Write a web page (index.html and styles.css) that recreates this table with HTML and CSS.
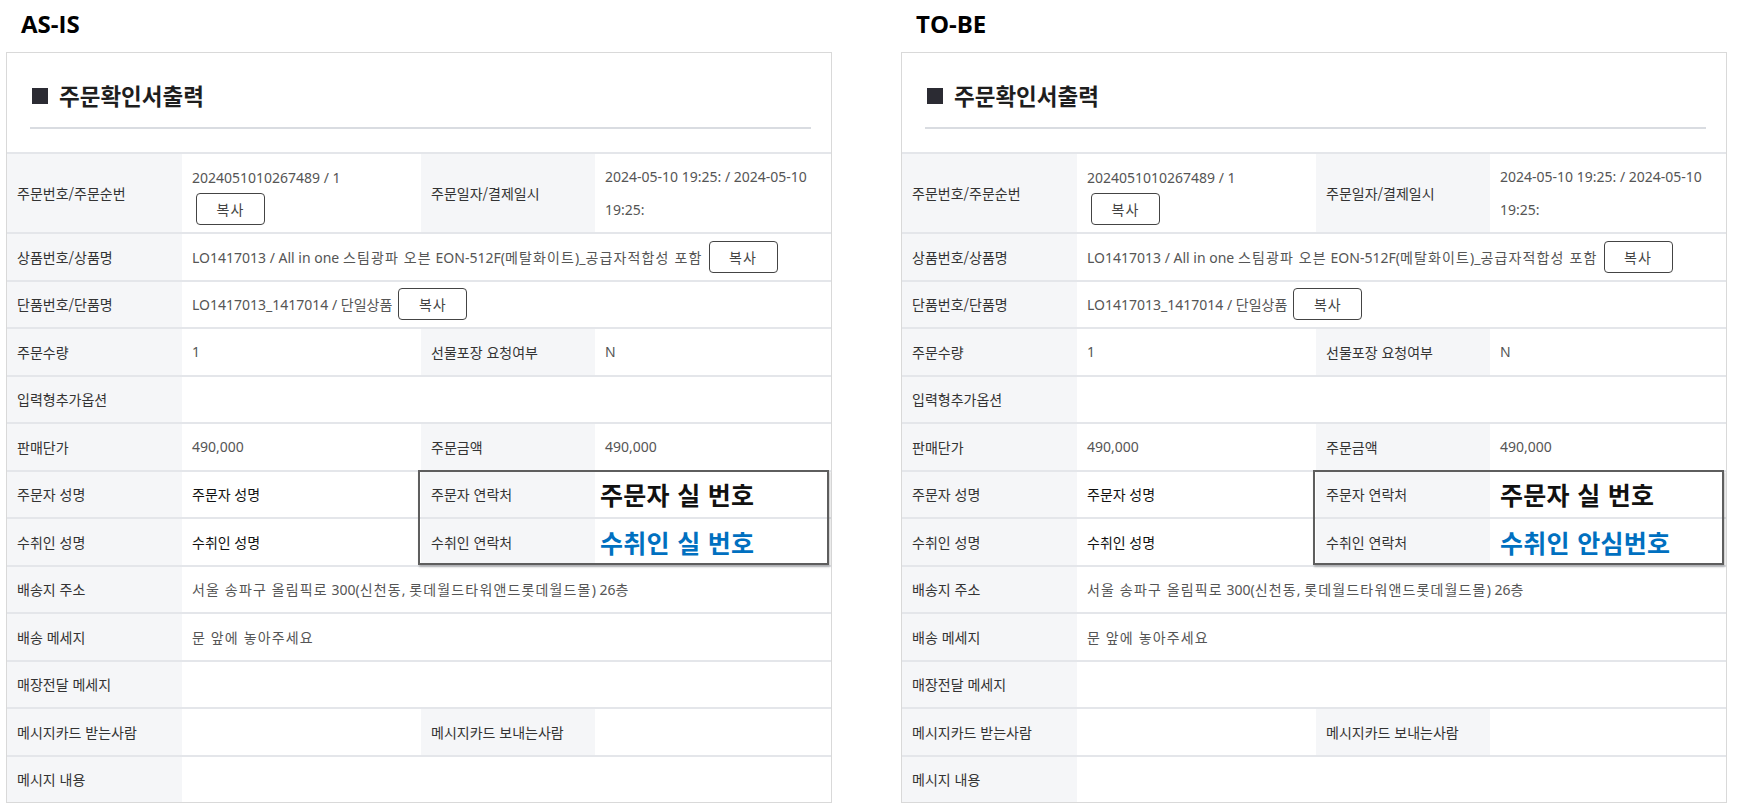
FILE: index.html
```html
<!DOCTYPE html>
<html lang="ko">
<head>
<meta charset="utf-8">
<title>주문확인서출력 AS-IS / TO-BE</title>
<link rel="stylesheet" href="styles.css">
</head>
<body>
<div class="page">
  <section class="col">
    <h2 class="title">AS-IS</h2>
    <div class="panel">
      <div class="head"><h1 class="head-title"><span class="sq"></span>주문확인서출력</h1></div>
      <div class="table">
        <div class="row row--tall">
          <div class="th">주문번호/주문순번</div>
          <div class="td td--stack"><span class="line">2024051010267489 / 1</span><button class="btn btn--under">복사</button></div>
          <div class="th">주문일자/결제일시</div>
          <div class="td td--date">2024-05-10 19:25: / 2024-05-10 19:25:</div>
        </div>
        <div class="row">
          <div class="th">상품번호/상품명</div>
          <div class="td td--wide"><span>LO1417013 / All in one <span class="ko">스팀광파 오븐</span> EON-512F(<span class="ko">메탈화이트</span>)_<span class="ko">공급자적합성 포함</span></span><button class="btn">복사</button></div>
        </div>
        <div class="row">
          <div class="th">단품번호/단품명</div>
          <div class="td td--wide">LO1417013_1417014 / 단일상품<button class="btn">복사</button></div>
        </div>
        <div class="row">
          <div class="th">주문수량</div>
          <div class="td">1</div>
          <div class="th">선물포장 요청여부</div>
          <div class="td">N</div>
        </div>
        <div class="row">
          <div class="th">입력형추가옵션</div>
          <div class="td td--wide"></div>
        </div>
        <div class="row">
          <div class="th">판매단가</div>
          <div class="td">490,000</div>
          <div class="th">주문금액</div>
          <div class="td">490,000</div>
        </div>
        <div class="pair">
          <div class="row">
            <div class="th">주문자 성명</div>
            <div class="td td--dark">주문자 성명</div>
            <div class="th">주문자 연락처</div>
            <div class="td td--big td--near">주문자 실 번호</div>
          </div>
          <div class="row">
            <div class="th">수취인 성명</div>
            <div class="td td--dark">수취인 성명</div>
            <div class="th">수취인 연락처</div>
            <div class="td td--big td--blue td--near">수취인 실 번호</div>
          </div>
          <div class="hl"></div>
        </div>
        <div class="row">
          <div class="th">배송지 주소</div>
          <div class="td td--wide"><span><span class="ko">서울 송파구 올림픽로</span> 300(<span class="ko">신천동</span>, <span class="ko">롯데월드타워앤드롯데월드몰</span>) 26<span class="ko">층</span></span></div>
        </div>
        <div class="row">
          <div class="th">배송 메세지</div>
          <div class="td td--wide"><span class="ko">문 앞에 놓아주세요</span></div>
        </div>
        <div class="row">
          <div class="th">매장전달 메세지</div>
          <div class="td td--wide"></div>
        </div>
        <div class="row">
          <div class="th">메시지카드 받는사람</div>
          <div class="td"></div>
          <div class="th">메시지카드 보내는사람</div>
          <div class="td"></div>
        </div>
        <div class="row">
          <div class="th">메시지 내용</div>
          <div class="td td--wide"></div>
        </div>
      </div>
    </div>
  </section>

  <section class="col">
    <h2 class="title">TO-BE</h2>
    <div class="panel">
      <div class="head"><h1 class="head-title"><span class="sq"></span>주문확인서출력</h1></div>
      <div class="table">
        <div class="row row--tall">
          <div class="th">주문번호/주문순번</div>
          <div class="td td--stack"><span class="line">2024051010267489 / 1</span><button class="btn btn--under">복사</button></div>
          <div class="th">주문일자/결제일시</div>
          <div class="td td--date">2024-05-10 19:25: / 2024-05-10 19:25:</div>
        </div>
        <div class="row">
          <div class="th">상품번호/상품명</div>
          <div class="td td--wide"><span>LO1417013 / All in one <span class="ko">스팀광파 오븐</span> EON-512F(<span class="ko">메탈화이트</span>)_<span class="ko">공급자적합성 포함</span></span><button class="btn">복사</button></div>
        </div>
        <div class="row">
          <div class="th">단품번호/단품명</div>
          <div class="td td--wide">LO1417013_1417014 / 단일상품<button class="btn">복사</button></div>
        </div>
        <div class="row">
          <div class="th">주문수량</div>
          <div class="td">1</div>
          <div class="th">선물포장 요청여부</div>
          <div class="td">N</div>
        </div>
        <div class="row">
          <div class="th">입력형추가옵션</div>
          <div class="td td--wide"></div>
        </div>
        <div class="row">
          <div class="th">판매단가</div>
          <div class="td">490,000</div>
          <div class="th">주문금액</div>
          <div class="td">490,000</div>
        </div>
        <div class="pair">
          <div class="row">
            <div class="th">주문자 성명</div>
            <div class="td td--dark">주문자 성명</div>
            <div class="th">주문자 연락처</div>
            <div class="td td--big">주문자 실 번호</div>
          </div>
          <div class="row">
            <div class="th">수취인 성명</div>
            <div class="td td--dark">수취인 성명</div>
            <div class="th">수취인 연락처</div>
            <div class="td td--big td--blue">수취인 안심번호</div>
          </div>
          <div class="hl"></div>
        </div>
        <div class="row">
          <div class="th">배송지 주소</div>
          <div class="td td--wide"><span><span class="ko">서울 송파구 올림픽로</span> 300(<span class="ko">신천동</span>, <span class="ko">롯데월드타워앤드롯데월드몰</span>) 26<span class="ko">층</span></span></div>
        </div>
        <div class="row">
          <div class="th">배송 메세지</div>
          <div class="td td--wide"><span class="ko">문 앞에 놓아주세요</span></div>
        </div>
        <div class="row">
          <div class="th">매장전달 메세지</div>
          <div class="td td--wide"></div>
        </div>
        <div class="row">
          <div class="th">메시지카드 받는사람</div>
          <div class="td"></div>
          <div class="th">메시지카드 보내는사람</div>
          <div class="td"></div>
        </div>
        <div class="row">
          <div class="th">메시지 내용</div>
          <div class="td td--wide"></div>
        </div>
      </div>
    </div>
  </section>
</div>
</body>
</html>
```

FILE: styles.css
```css
* { box-sizing: border-box; }

html, body {
  margin: 0;
  padding: 0;
  background: #ffffff;
}

body {
  font-family: "Noto Sans CJK KR", "Noto Sans", sans-serif;
  font-size: 14px;
  color: #444;
}

.page {
  display: flex;
  gap: 69px;
  padding-left: 6px;
}

.col {
  width: 826px;
  flex: 0 0 826px;
}

.title {
  margin: 0;
  height: 52px;
  padding: 8px 0 0 15px;
  font-family: "Open Sans", "Liberation Sans", sans-serif;
  font-weight: 700;
  font-size: 24px;
  line-height: 32px;
  color: #000;
}

.panel {
  border: 1px solid #d9d9d9;
  background: #fff;
}

.head {
  margin: 0 20px 23px 23px;
  padding: 27px 0 17px;
  border-bottom: 2px solid #d9dce1;
}

.head-title {
  margin: 0;
  display: flex;
  align-items: center;
  font-size: 22.5px;
  line-height: 30px;
  font-weight: 700;
  color: #1e1e1e;
}

.sq {
  width: 16px;
  height: 16px;
  margin: 2px 11px 0 2px;
  background: #2b2b33;
  flex: 0 0 16px;
}

.row {
  display: grid;
  grid-template-columns: 175px 239px 174px 1fr;
  height: 47.5px;
  border-top: 2px solid #e4e6ea;
}

.row--tall {
  height: 80px;
}

.th {
  display: flex;
  align-items: center;
  padding: 0 10px;
  background: #f5f6f8;
  color: #333;
  font-size: 14px;
  white-space: nowrap;
}

.td {
  display: flex;
  align-items: center;
  padding: 0 10px;
  color: #555;
  font-family: "Noto Sans", "Noto Sans CJK KR", sans-serif;
  font-size: 14px;
  white-space: nowrap;
}

.ko {
  letter-spacing: 1.15px;
}

.td--wide {
  grid-column: 2 / 5;
}

.td--stack {
  flex-direction: column;
  align-items: flex-start;
  justify-content: flex-start;
  padding-top: 13px;
}

.td--stack .line {
  line-height: 22px;
}

.td--date {
  white-space: normal;
  line-height: 33px;
}

.td--dark {
  color: #111;
}

.td--big {
  font-family: "Noto Sans CJK KR", sans-serif;
  font-size: 25px;
  font-weight: 700;
  letter-spacing: 0.3px;
  color: #111;
}

.td--near {
  padding-left: 5px;
}

.td--blue {
  color: #0070c0;
}

.btn {
  font-family: "Noto Sans CJK KR", "Noto Sans", sans-serif;
  font-size: 14px;
  color: #444;
  width: 69px;
  height: 32px;
  margin-left: 6px;
  padding: 0;
  background: #fff;
  border: 1px solid #444;
  border-radius: 4px;
  letter-spacing: 1px;
}

.btn--under {
  margin: 4px 0 0 4px;
}

.pair {
  position: relative;
}

.hl {
  position: absolute;
  top: 0;
  bottom: 0;
  left: 411px;
  right: 2px;
  border: 2px solid #5e5e5e;
  box-shadow: 1px 2px 2px rgba(0, 0, 0, 0.25);
  pointer-events: none;
}
```
